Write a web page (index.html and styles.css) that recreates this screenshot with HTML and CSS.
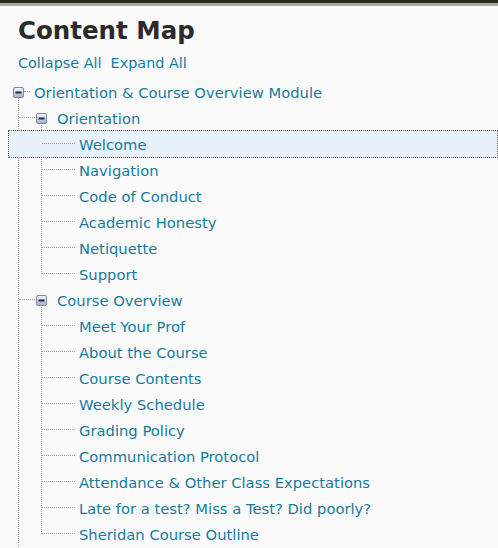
FILE: index.html
```html
<!DOCTYPE html>
<html>
<head>
<meta charset="utf-8">
<title>Content Map</title>
<link rel="stylesheet" href="styles.css">
</head>
<body>
<div class="topbar"></div>
<div class="page">
  <h1 class="title">Content Map</h1>
  <div class="actions"><a class="link" href="#">Collapse All</a><a class="link" href="#">Expand All</a></div>
  <ul class="tree">
    <li class="node">
      <div class="row lvl1"><span class="toggle"><svg width="11" height="11" viewBox="0 0 11 11"><defs><linearGradient id="g1" x1="0" y1="0" x2="0" y2="1"><stop offset="0" stop-color="#f6f8fb"/><stop offset="1" stop-color="#a4afc4"/></linearGradient></defs><rect x="0.5" y="0.5" width="10" height="10" rx="1.5" fill="url(#g1)" stroke="#7d8aa3"/><rect x="2.5" y="4.5" width="6" height="2" fill="#1f2a44"/></svg></span><a class="link" href="#">Orientation &amp; Course Overview Module</a></div>
      <ul class="children c1">
        <li class="node">
          <div class="row lvl2"><span class="toggle"><svg width="11" height="11" viewBox="0 0 11 11"><rect x="0.5" y="0.5" width="10" height="10" rx="1.5" fill="url(#g1)" stroke="#7d8aa3"/><rect x="2.5" y="4.5" width="6" height="2" fill="#1f2a44"/></svg></span><a class="link" href="#">Orientation</a></div>
          <ul class="children c2">
            <li><div class="row lvl3 selected"><a class="link" href="#">Welcome</a></div></li>
            <li><div class="row lvl3"><a class="link" href="#">Navigation</a></div></li>
            <li><div class="row lvl3"><a class="link" href="#">Code of Conduct</a></div></li>
            <li><div class="row lvl3"><a class="link" href="#">Academic Honesty</a></div></li>
            <li><div class="row lvl3"><a class="link" href="#">Netiquette</a></div></li>
            <li><div class="row lvl3"><a class="link" href="#">Support</a></div></li>
          </ul>
        </li>
        <li class="node">
          <div class="row lvl2"><span class="toggle"><svg width="11" height="11" viewBox="0 0 11 11"><rect x="0.5" y="0.5" width="10" height="10" rx="1.5" fill="url(#g1)" stroke="#7d8aa3"/><rect x="2.5" y="4.5" width="6" height="2" fill="#1f2a44"/></svg></span><a class="link" href="#">Course Overview</a></div>
          <ul class="children c2">
            <li><div class="row lvl3"><a class="link" href="#">Meet Your Prof</a></div></li>
            <li><div class="row lvl3"><a class="link" href="#">About the Course</a></div></li>
            <li><div class="row lvl3"><a class="link" href="#">Course Contents</a></div></li>
            <li><div class="row lvl3"><a class="link" href="#">Weekly Schedule</a></div></li>
            <li><div class="row lvl3"><a class="link" href="#">Grading Policy</a></div></li>
            <li><div class="row lvl3"><a class="link" href="#">Communication Protocol</a></div></li>
            <li><div class="row lvl3"><a class="link" href="#">Attendance &amp; Other Class Expectations</a></div></li>
            <li><div class="row lvl3"><a class="link" href="#">Late for a test? Miss a Test? Did poorly?</a></div></li>
            <li><div class="row lvl3"><a class="link" href="#">Sheridan Course Outline</a></div></li>
          </ul>
        </li>
      </ul>
    </li>
  </ul>
</div>
</body>
</html>
```
FILE: styles.css
```css
html, body {
  margin: 0;
  padding: 0;
  background: #fafafa;
  font-family: "DejaVu Sans", Verdana, sans-serif;
  overflow: hidden;
}
.topbar {
  height: 3px;
  background: #2b2a10;
  border-bottom: 3px solid #a9a9a9;
}
.page {
  padding-top: 10px;
}
.title {
  margin: 0 0 0 18px;
  font-size: 24.5px;
  line-height: 30px;
  font-weight: bold;
  color: #2b2b2b;
}
.actions {
  margin: 8px 0 0 18px;
  display: flex;
  gap: 9px;
  font-size: 14.4px;
  line-height: 18px;
}
.link {
  color: #177aa0;
  text-decoration: none;
}
.tree, .children {
  list-style: none;
  margin: 0;
  padding: 0;
}
.tree {
  margin: 7px 0 0 9px;
  width: 488px;
}
.children {
  position: relative;
}
.c1::before {
  content: "";
  position: absolute;
  left: 9px;
  top: -8px;
  bottom: -40px;
  border-left: 1px dotted #a0a0a0;
}
.c2::before {
  content: "";
  position: absolute;
  left: 32px;
  top: -8px;
  bottom: 13px;
  border-left: 1px dotted #a0a0a0;
}
.row {
  position: relative;
  height: 26px;
  font-size: 14.75px;
  display: flex;
  align-items: center;
  white-space: nowrap;
}
.row .link {
  line-height: 22px;
  padding-top: 2px;
}
.row::before {
  content: "";
  position: absolute;
  top: 12px;
  border-top: 1px dotted #a0a0a0;
}
.toggle {
  display: flex;
  width: 11px;
  height: 11px;
  position: relative;
  z-index: 1;
}
.lvl1 { padding-left: 4px; }
.lvl1 .toggle { margin-right: 10px; }
.lvl1::before { left: 15px; width: 6px; }
.lvl2 { padding-left: 27px; }
.lvl2 .toggle { margin-right: 10px; }
.lvl2::before { left: 10px; width: 16px; }
.lvl3 { padding-left: 70px; }
.lvl3::before { left: 33px; width: 33px; }
.selected {
  background: #e8f2fc;
  outline: 1px dotted #555;
}
```
